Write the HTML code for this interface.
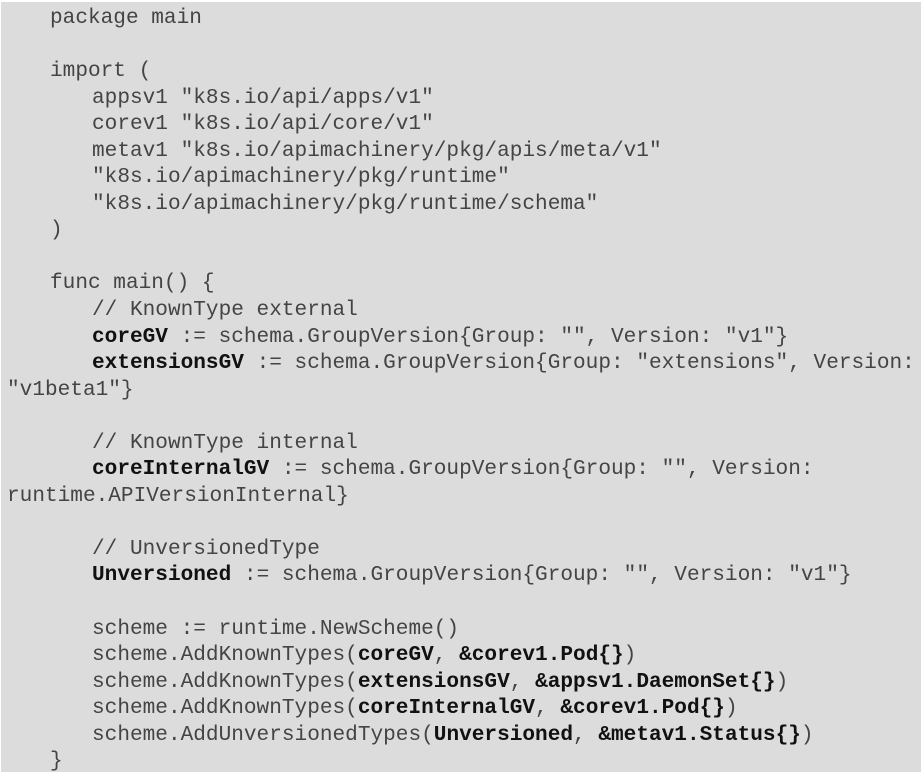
<!DOCTYPE html>
<html><head><meta charset="utf-8"><style>
html,body{margin:0;padding:0;background:#fff;width:921px;height:777px;overflow:hidden}
.box{position:absolute;left:1px;top:2px;width:920px;height:770px;background:#dcdcdc}
.code{position:absolute;left:0;top:5px;font-family:"Liberation Mono",monospace;font-size:21.1px;line-height:26.55px;color:#444}
.code div{height:26.55px;white-space:pre}
.l0{padding-left:7px}.l1{padding-left:50px}.l2{padding-left:92px}
b{color:#111;font-weight:bold}
</style></head><body>
<div class="box"></div>
<div class="code"><div class="l1">package main</div><div></div><div class="l1">import (</div><div class="l2">appsv1 "k8s.io/api/apps/v1"</div><div class="l2">corev1 "k8s.io/api/core/v1"</div><div class="l2">metav1 "k8s.io/apimachinery/pkg/apis/meta/v1"</div><div class="l2">"k8s.io/apimachinery/pkg/runtime"</div><div class="l2">"k8s.io/apimachinery/pkg/runtime/schema"</div><div class="l1">)</div><div></div><div class="l1">func main() {</div><div class="l2">// KnownType external</div><div class="l2"><b>coreGV</b> := schema.GroupVersion{Group: "", Version: "v1"}</div><div class="l2"><b>extensionsGV</b> := schema.GroupVersion{Group: "extensions", Version:</div><div class="l0">"v1beta1"}</div><div></div><div class="l2">// KnownType internal</div><div class="l2"><b>coreInternalGV</b> := schema.GroupVersion{Group: "", Version:</div><div class="l0">runtime.APIVersionInternal}</div><div></div><div class="l2">// UnversionedType</div><div class="l2"><b>Unversioned</b> := schema.GroupVersion{Group: "", Version: "v1"}</div><div></div><div class="l2">scheme := runtime.NewScheme()</div><div class="l2">scheme.AddKnownTypes(<b>coreGV</b>, <b>&amp;corev1.Pod{}</b>)</div><div class="l2">scheme.AddKnownTypes(<b>extensionsGV</b>, <b>&amp;appsv1.DaemonSet{}</b>)</div><div class="l2">scheme.AddKnownTypes(<b>coreInternalGV</b>, <b>&amp;corev1.Pod{}</b>)</div><div class="l2">scheme.AddUnversionedTypes(<b>Unversioned</b>, <b>&amp;metav1.Status{}</b>)</div><div class="l1">}</div></div>
</body></html>
